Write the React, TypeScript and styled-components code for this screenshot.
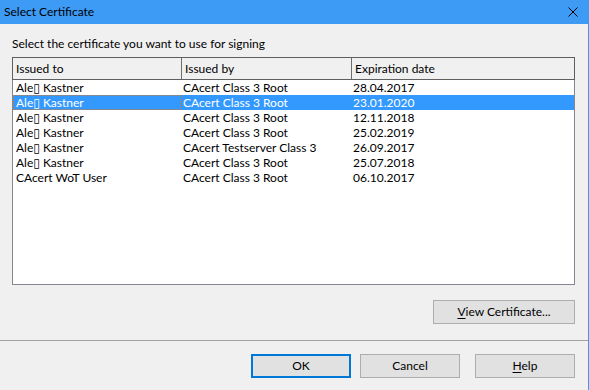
import React from "react";
import styled, { createGlobalStyle } from "styled-components";

const GlobalStyle = createGlobalStyle`
  html, body {
    margin: 0;
    padding: 0;
    background: #f0f0f0;
  }
  body {
    font-family: Lato, "Noto Sans", "DejaVu Sans", sans-serif;
    font-size: 12px;
    color: #000;
  }
  * { box-sizing: border-box; }
`;

const Window = styled.div`
  width: 589px;
  height: 390px;
  display: flex;
  flex-direction: column;
  background: #f0f0f0;
  border-right: 1px solid #3d9bf5;
  overflow: hidden;
`;

const TitleBar = styled.div`
  height: 24px;
  flex: none;
  display: flex;
  align-items: center;
  justify-content: space-between;
  padding: 0 11px 0 4px;
  background: #3d9bf5;
  margin-right: -1px;
`;

const Title = styled.span`
  font-size: 12px;
  line-height: 16px;
`;

const Body = styled.div`
  display: flex;
  flex-direction: column;
  padding: 12px 13px 0 12px;
`;

const Label = styled.div`
  height: 16px;
  line-height: 16px;
`;

const List = styled.div`
  margin-top: 5px;
  height: 228px;
  border: 1px solid #828790;
  background: #fff;
  display: flex;
  flex-direction: column;
`;

const Header = styled.div`
  display: grid;
  grid-template-columns: 169px 170px 1fr;
  height: 23px;
  margin: -1px -1px 0 -1px;
  border: 1px solid #5f5f5f;
  background: #f0f0f0;
`;

const HeaderCell = styled.div<{ $last?: boolean }>`
  padding-left: 3px;
  line-height: 21px;
  border-right: ${(p) => (p.$last ? "none" : "1px solid #6e6e6e")};
  white-space: nowrap;
  overflow: hidden;
`;

const Row = styled.div<{ $selected?: boolean }>`
  display: grid;
  grid-template-columns: 168px 170px 1fr;
  height: 15px;
  line-height: 15px;
  background: ${(p) => (p.$selected ? "#3399ff" : "transparent")};
  color: ${(p) => (p.$selected ? "#fff" : "#000")};
`;

const Cell = styled.div<{ $focus?: boolean }>`
  padding-left: 2px;
  white-space: nowrap;
  overflow: hidden;
  &:first-child {
    padding-left: 3px;
  }
  outline: ${(p) => (p.$focus ? "1px dotted #d2782d" : "none")};
  outline-offset: -1px;
`;

const ViewRow = styled.div`
  display: flex;
  justify-content: flex-end;
  margin-top: 15px;
`;

const Button = styled.button<{ $default?: boolean; $w?: number }>`
  width: ${(p) => p.$w ?? 100}px;
  height: 24px;
  padding: 0;
  background: #e1e1e1;
  border: ${(p) => (p.$default ? "2px solid #0078d7" : "1px solid #adadad")};
  font-family: inherit;
  font-size: 12px;
  color: #000;
  line-height: 20px;
  text-align: center;
`;

const Separator = styled.div`
  height: 1px;
  margin-top: 16px;
  background: #a0a0a0;
`;

const Footer = styled.div`
  display: flex;
  justify-content: flex-end;
  padding: 13px 13px 0 0;
  gap: 9px;
`;

const HelpButton = styled(Button)`
  margin-left: 6px;
`;

const U = styled.span`
  text-decoration: underline;
  text-underline-offset: 2px;
`;

const CloseIcon = () => (
  <svg width="10" height="10" viewBox="0 0 10 10" style={{ display: "block" }}>
    <path d="M0.5 0.5 L9.5 9.5 M9.5 0.5 L0.5 9.5" stroke="#000" strokeWidth="1" fill="none" />
  </svg>
);

const rows = [
  ["Ale\u25AF Kastner", "CAcert Class 3 Root", "28.04.2017"],
  ["Ale\u25AF Kastner", "CAcert Class 3 Root", "23.01.2020"],
  ["Ale\u25AF Kastner", "CAcert Class 3 Root", "12.11.2018"],
  ["Ale\u25AF Kastner", "CAcert Class 3 Root", "25.02.2019"],
  ["Ale\u25AF Kastner", "CAcert Testserver Class 3", "26.09.2017"],
  ["Ale\u25AF Kastner", "CAcert Class 3 Root", "25.07.2018"],
  ["CAcert WoT User", "CAcert Class 3 Root", "06.10.2017"],
];

export default function App() {
  const selected = 1;
  return (
    <>
      <GlobalStyle />
      <Window>
        <TitleBar>
          <Title>Select Certificate</Title>
          <CloseIcon />
        </TitleBar>
        <Body>
          <Label>Select the certificate you want to use for signing</Label>
          <List>
            <Header>
              <HeaderCell>Issued to</HeaderCell>
              <HeaderCell>Issued by</HeaderCell>
              <HeaderCell $last>Expiration date</HeaderCell>
            </Header>
            {rows.map((r, i) => (
              <Row key={i} $selected={i === selected}>
                <Cell $focus={i === selected}>{r[0]}</Cell>
                <Cell>{r[1]}</Cell>
                <Cell>{r[2]}</Cell>
              </Row>
            ))}
          </List>
          <ViewRow>
            <Button $w={142}>
              <U>V</U>iew Certificate...
            </Button>
          </ViewRow>
        </Body>
        <Separator />
        <Footer>
          <Button $default>OK</Button>
          <Button>Cancel</Button>
          <HelpButton>
            <U>H</U>elp
          </HelpButton>
        </Footer>
      </Window>
    </>
  );
}
